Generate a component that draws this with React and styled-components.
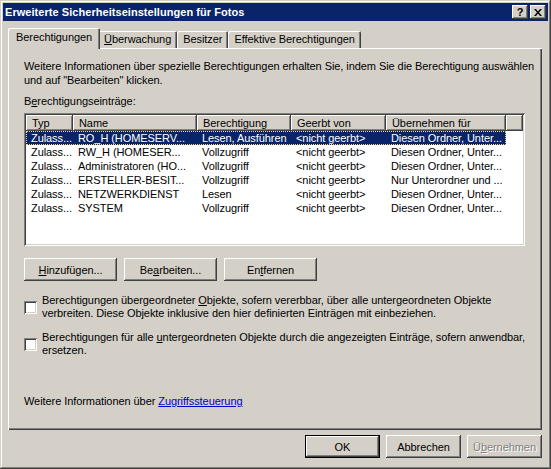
import React from 'react'
import styled, { createGlobalStyle, css } from 'styled-components'

const GlobalStyle = createGlobalStyle`
  html, body {
    margin: 0;
    padding: 0;
    background: #d4d0c8;
  }
  body {
    font-family: "Liberation Sans", Arial, sans-serif;
    font-size: 11px;
    letter-spacing: -0.07px;
    color: #000;
  }
`;

const raised = css`
  box-shadow: inset -1px -1px #404040, inset 1px 1px #fff, inset -2px -2px #808080, inset 2px 2px #d4d0c8;
`;

const sunken = css`
  box-shadow: inset 1px 1px #808080, inset -1px -1px #fff, inset 2px 2px #404040, inset -2px -2px #d4d0c8;
`;

const Window = styled.div`
  width: 551px;
  height: 469px;
  box-sizing: border-box;
  padding: 3px;
  background: #d4d0c8;
  display: flex;
  flex-direction: column;
  box-shadow: inset -1px -1px #404040, inset 1px 1px #d4d0c8, inset -2px -2px #808080, inset 2px 2px #fff;
`;

const TitleBar = styled.div`
  height: 18px;
  background: #0a246a;
  display: flex;
  align-items: center;
  padding: 0 2px 0 2px;
  flex-shrink: 0;
`;

const Title = styled.div`
  flex: 1;
  color: #fff;
  font-weight: bold;
  font-size: 11px;
  letter-spacing: 0.05px;
  white-space: nowrap;
`;

const CaptionButton = styled.div`
  width: 16px;
  height: 14px;
  margin-left: 2px;
  background: #d4d0c8;
  ${raised};
  display: flex;
  align-items: center;
  justify-content: center;
  font-weight: bold;
  font-size: 11px;
  line-height: 14px;
`;

const Body = styled.div`
  flex: 1;
  display: flex;
  flex-direction: column;
  padding: 7px 6px 8px 5px;
`;

const TabRow = styled.div`
  display: flex;
  align-items: flex-end;
  height: 20px;
  padding-left: 2px;
  flex-shrink: 0;
`;

const Tab = styled.div`
  height: 17px;
  line-height: 17px;
  padding: 0 6px;
  white-space: nowrap;
  border-radius: 2px 2px 0 0;
  background: #d4d0c8;
  box-shadow: inset 1px 1px #fff, inset -1px 0 #404040, inset -2px 0 #808080;
  ${(p) => p.$active && css`
    height: 21px;
    line-height: 19px;
    padding: 0 8px;
    margin: 0 -2px -1px;
    position: relative;
    z-index: 1;
  `}
`;

const Panel = styled.div`
  flex: 1;
  display: flex;
  flex-direction: column;
  padding: 11px 17px 22px 16px;
  box-shadow: inset 1px 1px #fff, inset -1px -1px #404040, inset -2px -2px #808080;
`;

const Intro = styled.div`
  line-height: 14px;
  white-space: nowrap;
`;

const Label = styled.div`
  margin-top: 7px;
  line-height: 14px;
`;

const ListBox = styled.div`
  margin-top: 5px;
  height: 133px;
  box-sizing: border-box;
  padding: 2px;
  background: #fff;
  overflow: hidden;
  ${sunken};
`;

const HeaderRow = styled.div`
  display: grid;
  grid-template-columns: 47px 124px 94px 95px 120px 1fr;
  height: 16px;
`;

const HeaderCell = styled.div`
  background: #d4d0c8;
  padding-left: 6px;
  line-height: 16px;
  white-space: nowrap;
  overflow: hidden;
  box-shadow: inset -1px -1px #404040, inset 1px 1px #fff, inset -2px -2px #808080;
`;

const Row = styled.div`
  display: grid;
  grid-template-columns: 47px 124px 94px 95px 120px;
  width: 480px;
  height: 14px;
  line-height: 14px;
  ${(p) => p.$selected && css`
    background: #0a246a;
    color: #fff;
    outline: 1px dotted #f0d890;
    outline-offset: -1px;
  `}
`;

const Cell = styled.div`
  padding-left: 5px;
  white-space: nowrap;
  overflow: hidden;
`;

const ButtonRow = styled.div`
  display: flex;
  gap: 7px;
  margin-top: 12px;
`;

const Button = styled.button`
  width: ${(p) => p.$width || 75}px;
  height: 23px;
  padding: 0;
  border: none;
  background: #d4d0c8;
  font-family: inherit;
  font-size: 11px;
  letter-spacing: inherit;
  color: #000;
  ${raised};
  ${(p) => p.$default && css`
    box-shadow: inset 0 0 0 1px #000, inset -2px -2px #404040, inset 2px 2px #fff, inset -3px -3px #808080;
  `}
  ${(p) => p.disabled && css`
    color: #808080;
    text-shadow: 1px 1px #fff;
  `}
`;

const CheckRow = styled.div`
  display: flex;
  align-items: center;
  gap: 5px;
  line-height: 13px;
  margin-top: ${(p) => p.$gap}px;
`;

const CheckText = styled.div`
  white-space: nowrap;
`;

const CheckBox = styled.div`
  width: 13px;
  height: 13px;
  flex-shrink: 0;
  background: #fff;
  ${sunken};
`;

const LinkLine = styled.div`
  margin-top: auto;
  line-height: 14px;
`;

const Link = styled.span`
  color: #0000cc;
  text-decoration: underline;
`;

const Footer = styled.div`
  display: flex;
  justify-content: flex-end;
  gap: 6px;
  margin-top: 5px;
`;

const rows = [
  ['Zulass...', 'RO_H (HOMESERV...', 'Lesen, Ausführen', '<nicht geerbt>', 'Diesen Ordner, Unter...'],
  ['Zulass...', 'RW_H (HOMESER...', 'Vollzugriff', '<nicht geerbt>', 'Diesen Ordner, Unter...'],
  ['Zulass...', 'Administratoren (HO...', 'Vollzugriff', '<nicht geerbt>', 'Diesen Ordner, Unter...'],
  ['Zulass...', 'ERSTELLER-BESIT...', 'Vollzugriff', '<nicht geerbt>', 'Nur Unterordner und ...'],
  ['Zulass...', 'NETZWERKDIENST', 'Lesen', '<nicht geerbt>', 'Diesen Ordner, Unter...'],
  ['Zulass...', 'SYSTEM', 'Vollzugriff', '<nicht geerbt>', 'Diesen Ordner, Unter...'],
];

const headers = ['Typ', 'Name', 'Berechtigung', 'Geerbt von', 'Übernehmen für', ''];

export default function App() {
  return (
    <>
      <GlobalStyle />
      <Window>
        <TitleBar>
          <Title>Erweiterte Sicherheitseinstellungen für Fotos</Title>
          <CaptionButton>?</CaptionButton>
          <CaptionButton>
            <svg width="8" height="7" viewBox="0 0 8 7">
              <path d="M0 0h2l2 2.5L6 0h2L5 3.5 8 7H6L4 4.5 2 7H0l3-3.5z" fill="#000" />
            </svg>
          </CaptionButton>
        </TitleBar>
        <Body>
          <TabRow>
            <Tab $active>Berechtigungen</Tab>
            <Tab><u>Ü</u>berwachung</Tab>
            <Tab>Besitzer</Tab>
            <Tab>Effektive Berechtigungen</Tab>
          </TabRow>
          <Panel>
            <Intro>
              Weitere Informationen über spezielle Berechtigungen erhalten Sie, indem Sie die Berechtigung auswählen<br />
              und auf "Bearbeiten" klicken.
            </Intro>
            <Label>B<u>e</u>rechtigungseinträge:</Label>
            <ListBox>
              <HeaderRow>
                {headers.map((h, i) => <HeaderCell key={i}>{h}</HeaderCell>)}
              </HeaderRow>
              {rows.map((r, i) => (
                <Row key={i} $selected={i === 0}>
                  {r.map((c, j) => <Cell key={j}>{c}</Cell>)}
                </Row>
              ))}
            </ListBox>
            <ButtonRow>
              <Button $width={93}><u>H</u>inzufügen...</Button>
              <Button $width={93}>Be<u>a</u>rbeiten...</Button>
              <Button $width={93}>En<u>t</u>fernen</Button>
            </ButtonRow>
            <CheckRow $gap={13}>
              <CheckBox />
              <CheckText>
                Berechtigungen übergeordneter <u>O</u>bjekte, sofern vererbbar, über alle untergeordneten Objekte<br />
                verbreiten. Diese Objekte inklusive den hier definierten Einträgen mit einbeziehen.
              </CheckText>
            </CheckRow>
            <CheckRow $gap={11}>
              <CheckBox />
              <CheckText>
                Berechtigungen für alle <u>u</u>ntergeordneten Objekte durch die angezeigten Einträge, sofern anwendbar,<br />
                ersetzen.
              </CheckText>
            </CheckRow>
            <LinkLine>
              Weitere Informationen über <Link>Zugriffssteuerung</Link>
            </LinkLine>
          </Panel>
          <Footer>
            <Button $default>OK</Button>
            <Button>Abbrechen</Button>
            <Button disabled>Ü<u>b</u>ernehmen</Button>
          </Footer>
        </Body>
      </Window>
    </>
  )
}
